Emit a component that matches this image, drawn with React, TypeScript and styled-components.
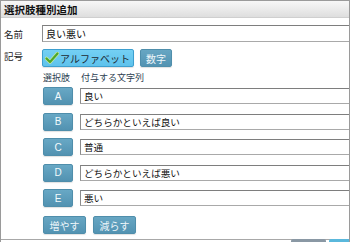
import React, { useState } from "react";
import styled, { createGlobalStyle } from "styled-components";

const GlobalStyle = createGlobalStyle`
  html, body {
    margin: 0;
    padding: 0;
    background: #ffffff;
  }
  body {
    font-family: "Noto Sans CJK JP", "Noto Sans", sans-serif;
    color: #222;
  }
`;

const Dialog = styled.div`
  width: 350px;
  height: 242px;
  box-sizing: border-box;
  border: 1px solid #9a9a9a;
  border-bottom: none;
  overflow: hidden;
  display: flex;
  flex-direction: column;
  background: #fff;
`;

const TitleBar = styled.div`
  height: 16px;
  flex: none;
  border-bottom: 1px solid #cfcfcf;
  background: linear-gradient(#f7f7f7, #dedede);
  display: flex;
  align-items: center;
  padding-left: 3px;
  font-size: 10.5px;
  font-weight: bold;
  color: #111;
`;

const Body = styled.div`
  flex: none;
  height: 222px;
  box-sizing: border-box;
  padding: 7px 0 0 3px;
  border-bottom: 1px solid #a8a8a8;
  display: flex;
  flex-direction: column;
`;

const FieldRow = styled.div<{ $gap?: number }>`
  display: grid;
  grid-template-columns: 38px 1fr;
  margin-top: ${(p) => p.$gap ?? 0}px;
`;

const Label = styled.div<{ $center?: boolean }>`
  font-size: 9.5px;
  line-height: 12px;
  color: #222;
  align-self: ${(p) => (p.$center ? "center" : "start")};
  padding-top: ${(p) => (p.$center ? 0 : 1)}px;
`;

const TextBox = styled.input`
  box-sizing: border-box;
  height: 17px;
  margin: 0 -4px 0 0;
  padding: 0 3px;
  border: 1px solid #a9a9a9;
  border-top-color: #7e7e7e;
  border-left-color: #8c8c8c;
  font-family: inherit;
  font-size: 10px;
  color: #111;
  outline: none;
  background: #fff;
  min-width: 0;
`;

const ToggleGroup = styled.div`
  display: flex;
  gap: 6px;
`;

const ToggleButton = styled.button<{ $active?: boolean }>`
  box-sizing: border-box;
  height: 18px;
  padding: 0 ${(p) => (p.$active ? "3px 0 2px" : "5px")};
  border-radius: 2px;
  border: 1px solid ${(p) => (p.$active ? "#3d9fcf" : "#4f8eab")};
  background: ${(p) =>
    p.$active
      ? "linear-gradient(#74d0f4, #5ec2ec)"
      : "linear-gradient(#67a6c3, #5393b2)"};
  color: ${(p) => (p.$active ? "#1d2a33" : "#eef6fa")};
  font-family: inherit;
  font-size: 10px;
  display: flex;
  align-items: center;
  gap: 1px;
  cursor: pointer;
  box-shadow: 0 1px 1px rgba(0, 0, 0, 0.12);
`;

const Check = () => (
  <svg width="14" height="12" viewBox="0 0 14 12">
    <path
      d="M1.5 6.5 L5 10 L12.5 1.5"
      fill="none"
      stroke="#c8e8a8"
      strokeWidth="3.6"
      strokeLinecap="round"
      strokeLinejoin="round"
    />
    <path
      d="M1.5 6.5 L5 10 L12.5 1.5"
      fill="none"
      stroke="#4da82a"
      strokeWidth="2.2"
      strokeLinecap="round"
      strokeLinejoin="round"
    />
  </svg>
);

const ChoiceSection = styled.div`
  margin-left: 39px;
  display: flex;
  flex-direction: column;
`;

const ChoiceHeader = styled.div`
  display: grid;
  grid-template-columns: 38px 1fr;
  margin-top: 4px;
  height: 12px;
  align-items: center;
  font-size: 9px;
  color: #2c3e50;
`;

const ChoiceList = styled.div`
  display: flex;
  flex-direction: column;
  gap: 7.5px;
  margin-top: 4px;
`;

const ChoiceRow = styled.div`
  display: grid;
  grid-template-columns: 30px 1fr;
  column-gap: 7px;
  align-items: center;
  height: 18px;
`;

const LetterButton = styled.button`
  box-sizing: border-box;
  width: 30px;
  height: 18px;
  padding: 0;
  border-radius: 2px;
  border: 1px solid #4f8eab;
  background: linear-gradient(#68a8c5, #5292b1);
  color: #f4fafc;
  font-family: "Liberation Sans", Arial, sans-serif;
  font-size: 10px;
  cursor: pointer;
  box-shadow: 0 1px 1px rgba(0, 0, 0, 0.12);
`;

const ChoiceInput = styled(TextBox)`
  height: 16px;
  font-size: 9.6px;
`;

const ActionRow = styled.div`
  display: flex;
  gap: 7px;
  margin-top: 9px;
`;

const ActionButton = styled(ToggleButton)`
  width: 43px;
  justify-content: center;
  padding: 0;
`;

const Footer = styled.div`
  display: flex;
  justify-content: flex-end;
  gap: 3px;
  margin: -1px -10px 0 0;
`;

const FooterButton = styled.div<{ $primary?: boolean }>`
  width: ${(p) => (p.$primary ? 30 : 35)}px;
  height: 18px;
  border-radius: 2px;
  background: ${(p) => (p.$primary ? "#5ab8dc" : "#8a98a4")};
`;

const choices = [
  { key: "A", value: "良い" },
  { key: "B", value: "どちらかといえば良い" },
  { key: "C", value: "普通" },
  { key: "D", value: "どちらかといえば悪い" },
  { key: "E", value: "悪い" },
];

const App = () => {
  const [mode, setMode] = useState<"alpha" | "num">("alpha");

  return (
    <>
      <GlobalStyle />
      <Dialog>
        <TitleBar>選択肢種別追加</TitleBar>
        <Body>
          <FieldRow>
            <Label $center>名前</Label>
            <TextBox defaultValue="良い悪い" />
          </FieldRow>
          <FieldRow $gap={7}>
            <Label>記号</Label>
            <ToggleGroup>
              <ToggleButton
                $active={mode === "alpha"}
                onClick={() => setMode("alpha")}
              >
                {mode === "alpha" && <Check />}
                アルファベット
              </ToggleButton>
              <ToggleButton
                $active={mode === "num"}
                onClick={() => setMode("num")}
              >
                数字
              </ToggleButton>
            </ToggleGroup>
          </FieldRow>
          <ChoiceSection>
            <ChoiceHeader>
              <span>選択肢</span>
              <span>付与する文字列</span>
            </ChoiceHeader>
            <ChoiceList>
              {choices.map((c) => (
                <ChoiceRow key={c.key}>
                  <LetterButton>{c.key}</LetterButton>
                  <ChoiceInput defaultValue={c.value} />
                </ChoiceRow>
              ))}
            </ChoiceList>
            <ActionRow>
              <ActionButton>増やす</ActionButton>
              <ActionButton>減らす</ActionButton>
            </ActionRow>
          </ChoiceSection>
        </Body>
        <Footer>
          <FooterButton />
          <FooterButton $primary />
        </Footer>
      </Dialog>
    </>
  );
};

export default App;
